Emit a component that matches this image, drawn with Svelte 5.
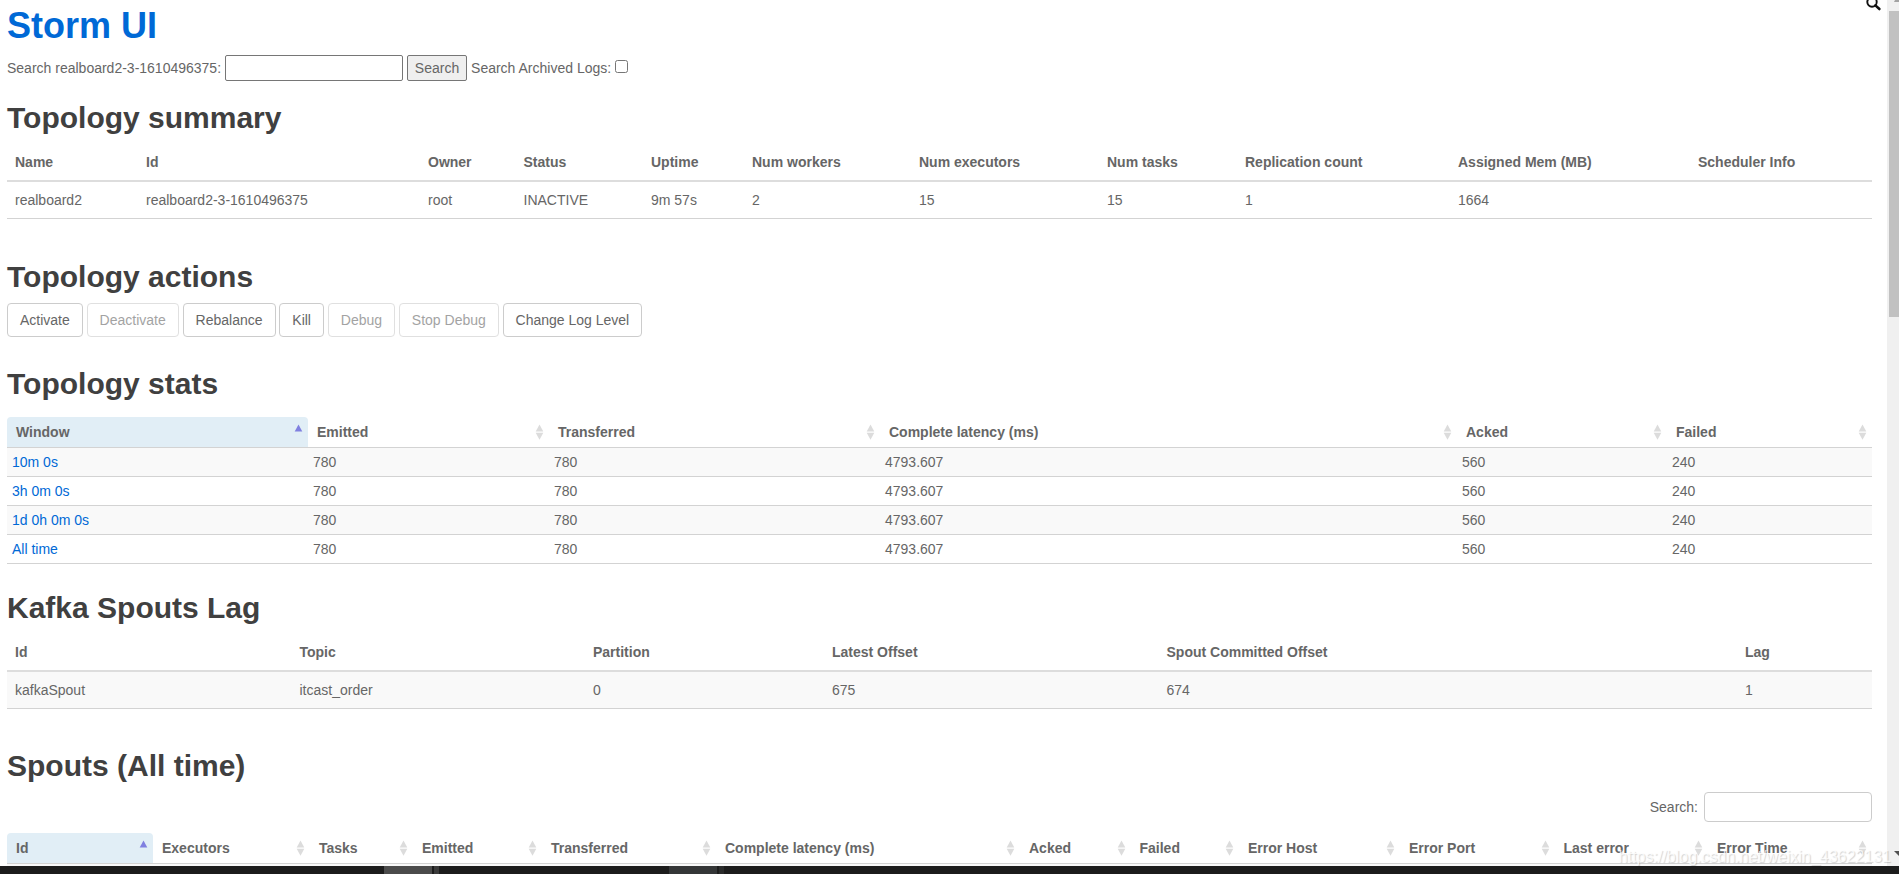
<script>
  const summaryCols = [
    { label: 'Name', width: 131 },
    { label: 'Id', width: 282 },
    { label: 'Owner', width: 95.5 },
    { label: 'Status', width: 127.5 },
    { label: 'Uptime', width: 101 },
    { label: 'Num workers', width: 167 },
    { label: 'Num executors', width: 188 },
    { label: 'Num tasks', width: 138 },
    { label: 'Replication count', width: 213 },
    { label: 'Assigned Mem (MB)', width: 240 },
    { label: 'Scheduler Info', width: 182 }
  ];

  const summary = ['realboard2', 'realboard2-3-1610496375', 'root', 'INACTIVE', '9m 57s', '2', '15', '15', '1', '1664', ''];

  const actions = [
    { label: 'Activate', enabled: true },
    { label: 'Deactivate', enabled: false },
    { label: 'Rebalance', enabled: true },
    { label: 'Kill', enabled: true },
    { label: 'Debug', enabled: false },
    { label: 'Stop Debug', enabled: false },
    { label: 'Change Log Level', enabled: true }
  ];

  const statsCols = [
    { label: 'Window', width: 301 },
    { label: 'Emitted', width: 241 },
    { label: 'Transferred', width: 331 },
    { label: 'Complete latency (ms)', width: 577 },
    { label: 'Acked', width: 210 },
    { label: 'Failed', width: 205 }
  ];

  const stats = ['10m 0s', '3h 0m 0s', '1d 0h 0m 0s', 'All time'].map((window) => ({
    window,
    values: ['780', '780', '4793.607', '560', '240']
  }));

  const lagCols = [
    { label: 'Id', width: 284.5 },
    { label: 'Topic', width: 293.5 },
    { label: 'Partition', width: 239 },
    { label: 'Latest Offset', width: 334.5 },
    { label: 'Spout Committed Offset', width: 578.5 },
    { label: 'Lag', width: 135 }
  ];

  const lag = ['kafkaSpout', 'itcast_order', '0', '675', '674', '1'];

  const spoutCols = [
    { label: 'Id', width: 146 },
    { label: 'Executors', width: 157 },
    { label: 'Tasks', width: 103 },
    { label: 'Emitted', width: 129 },
    { label: 'Transferred', width: 174 },
    { label: 'Complete latency (ms)', width: 304 },
    { label: 'Acked', width: 110.5 },
    { label: 'Failed', width: 108.5 },
    { label: 'Error Host', width: 161 },
    { label: 'Error Port', width: 154.5 },
    { label: 'Last error', width: 153.5 },
    { label: 'Error Time', width: 164 }
  ];

  let query = $state('');
  let archived = $state(false);
  let spoutFilter = $state('');
</script>

{#snippet columns(cols)}
  <colgroup>
    {#each cols as col}
      <col style="width: {col.width}px" />
    {/each}
  </colgroup>
{/snippet}

{#snippet sortHead(cols)}
  <thead>
    <tr>
      {#each cols as col, i}
        <th class:sorted={i === 0}>
          <div class="sort-cell">
            <span>{col.label}</span>
            <svg class="sort-icon" width="9" height="16" viewBox="0 0 9 16">
              <path class="up" d="M4.5 0.5 L8.3 7.5 H0.7 Z" />
              {#if i > 0}
                <path class="down" d="M0.7 8.8 H8.3 L4.5 15.8 Z" />
              {/if}
            </svg>
          </div>
        </th>
      {/each}
    </tr>
  </thead>
{/snippet}

<div class="screen">
  <div class="viewport">
    <main class="page">
      <h1><a href="#top">Storm UI</a></h1>

      <form class="search-form">
        <label for="search">Search realboard2-3-1610496375:</label>
        <input id="search" class="search-box" type="text" bind:value={query} />
        <button class="search-btn" type="button">Search</button>
        <label for="archived">Search Archived Logs:</label>
        <input id="archived" class="archived" type="checkbox" bind:checked={archived} />
      </form>

      <section class="summary">
        <h2>Topology summary</h2>
        <table class="plain">
          {@render columns(summaryCols)}
          <thead>
            <tr>
              {#each summaryCols as col}<th>{col.label}</th>{/each}
            </tr>
          </thead>
          <tbody>
            <tr>
              {#each summary as value}<td>{value}</td>{/each}
            </tr>
          </tbody>
        </table>
      </section>

      <section class="actions">
        <h2>Topology actions</h2>
        <div class="action-row">
          {#each actions as action}
            <button class="btn" type="button" disabled={!action.enabled}>{action.label}</button>
          {/each}
        </div>
      </section>

      <section class="stats">
        <h2>Topology stats</h2>
        <table class="compact">
          {@render columns(statsCols)}
          {@render sortHead(statsCols)}
          <tbody>
            {#each stats as row}
              <tr>
                <td><a href="#stats">{row.window}</a></td>
                {#each row.values as value}<td>{value}</td>{/each}
              </tr>
            {/each}
          </tbody>
        </table>
      </section>

      <section class="lag">
        <h2>Kafka Spouts Lag</h2>
        <table class="plain striped">
          {@render columns(lagCols)}
          <thead>
            <tr>
              {#each lagCols as col}<th>{col.label}</th>{/each}
            </tr>
          </thead>
          <tbody>
            <tr>
              {#each lag as value}<td>{value}</td>{/each}
            </tr>
          </tbody>
        </table>
      </section>

      <section class="spouts">
        <h2>Spouts (All time)</h2>
        <div class="filter">
          <label for="spout-filter">Search:</label>
          <input id="spout-filter" type="text" bind:value={spoutFilter} />
        </div>
        <table class="compact">
          {@render columns(spoutCols)}
          {@render sortHead(spoutCols)}
          <tbody>
            <tr>
              {#each spoutCols as col}<td></td>{/each}
            </tr>
          </tbody>
        </table>
      </section>
    </main>

    <div class="scrollbar">
      <svg width="12" height="11" viewBox="0 0 12 11">
        <path d="M7 2 L8 0 H12 V2 Z" fill="#a3a3a3" />
      </svg>
      <div class="thumb"></div>
      <svg class="arrow-down" width="12" height="6" viewBox="0 0 12 6">
        <path d="M7 0 H12 V5 Z" fill="#505050" />
      </svg>
    </div>
  </div>

  <div class="taskbar">
    <span class="task"></span>
    <span class="task-edge"></span>
    <span class="task dim"></span>
    <span class="task-edge dim"></span>
  </div>

  <svg class="magnifier" width="16" height="11" viewBox="0 0 16 11">
    <circle cx="6" cy="2" r="4.7" fill="none" stroke="#111" stroke-width="1.9" />
    <path d="M9.4 5.4 L13.4 9" stroke="#111" stroke-width="2.6" stroke-linecap="round" />
  </svg>
  <span class="watermark">https://blog.csdn.net/weixin_43622131</span>
</div>

<style>
  :global(body) {
    overflow: hidden;
    background: #fff;
  }

  .screen {
    position: relative;
    width: 1899px;
    height: 874px;
    display: flex;
    flex-direction: column;
    overflow: hidden;
    font: 14px/20px Arial, "Liberation Sans", sans-serif;
    color: #666;
  }

  .viewport {
    height: 866px;
    display: flex;
    overflow: hidden;
  }

  .page {
    width: 1865px;
    padding: 6px 15px 0 7px;
  }

  a {
    color: #0069d6;
    text-decoration: none;
  }

  h1 {
    margin: 0 0 9px;
    font-size: 36px;
    line-height: 40px;
  }

  h2 {
    margin: 0 0 8px;
    font-size: 30px;
    line-height: 36px;
    color: #404040;
  }

  .search-form {
    display: flex;
    align-items: center;
    height: 26px;
  }

  input,
  button {
    box-sizing: border-box;
    font: inherit;
    color: inherit;
  }

  .search-box {
    width: 178px;
    height: 26px;
    margin: 0 4px;
    border: 1px solid #767676;
    border-radius: 2px;
  }

  .search-btn {
    width: 60px;
    height: 26px;
    margin-right: 4px;
    padding: 0;
    background: #efefef;
    border: 1px solid #767676;
    border-radius: 2px;
  }

  .archived {
    width: 13px;
    height: 13px;
    margin: 0 0 3px 4px;
  }

  .summary { margin-top: 19px; }
  .actions { margin-top: 40px; }
  .stats { margin-top: 29px; }
  .lag { margin-top: 26px; }
  .spouts { margin-top: 39px; }

  table {
    width: 1865px;
    table-layout: fixed;
    border-collapse: separate;
    border-spacing: 0;
  }

  th,
  td {
    text-align: left;
    white-space: nowrap;
  }

  .plain th {
    padding: 8px;
    border-bottom: 2px solid #ddd;
  }

  .plain td {
    height: 20px;
    padding: 8px;
    border-bottom: 1px solid #d3d3d3;
  }

  .striped td { background: #f9f9f9; }

  .action-row {
    display: flex;
    gap: 3.8px;
  }

  .btn {
    height: 34px;
    padding: 0 12px;
    background: #fff;
    border: 1px solid #ccc;
    border-radius: 4px;
  }

  .btn:disabled { opacity: 0.6; }

  .stats h2 { margin-bottom: 15px; }

  .compact th {
    height: 30px;
    padding: 0 5px 0 9px;
    border-bottom: 1px solid #d3d3d3;
  }

  .compact th.sorted {
    background: #e1eef6;
    border-radius: 4px 4px 0 0;
  }

  .sort-cell {
    display: flex;
    align-items: center;
    justify-content: space-between;
  }

  .sort-icon { fill: #dcdcdc; }
  .sorted .sort-icon { fill: #8080e0; }

  .compact td {
    height: 28px;
    padding: 0 5px;
    border-bottom: 1px solid #d3d3d3;
  }

  .compact tbody tr:nth-child(odd) { background: #f9f9f9; }

  .filter {
    display: flex;
    justify-content: flex-end;
    align-items: center;
    gap: 6px;
    margin-bottom: 11px;
  }

  .filter input {
    width: 168px;
    height: 30px;
    border: 1px solid #ccc;
    border-radius: 4px;
  }

  .scrollbar {
    width: 12px;
    display: flex;
    flex-direction: column;
    background: #f0f0f0;
  }

  .scrollbar svg { flex: none; }

  .thumb {
    height: 306px;
    margin-left: 2px;
    background: #c1c1c1;
  }

  .arrow-down { margin: auto 0 9px; }

  .taskbar {
    height: 8px;
    display: flex;
    padding-left: 384px;
    background: #1c1c1c;
  }

  .task {
    width: 48px;
    margin-right: 2px;
    background: #4b4b4b;
  }

  .task-edge {
    width: 5px;
    margin-right: 230px;
    background: #3a3a3a;
  }

  .task.dim { background: #343637; }
  .task-edge.dim { background: #2a2b2b; }

  .magnifier {
    position: absolute;
    top: 0;
    left: 1865.5px;
  }

  .watermark {
    position: absolute;
    right: 8px;
    bottom: 7px;
    font-size: 16px;
    color: rgba(255, 255, 255, 0.8);
    text-shadow: 1px 1px 1px rgba(0, 0, 0, 0.18);
  }
</style>
